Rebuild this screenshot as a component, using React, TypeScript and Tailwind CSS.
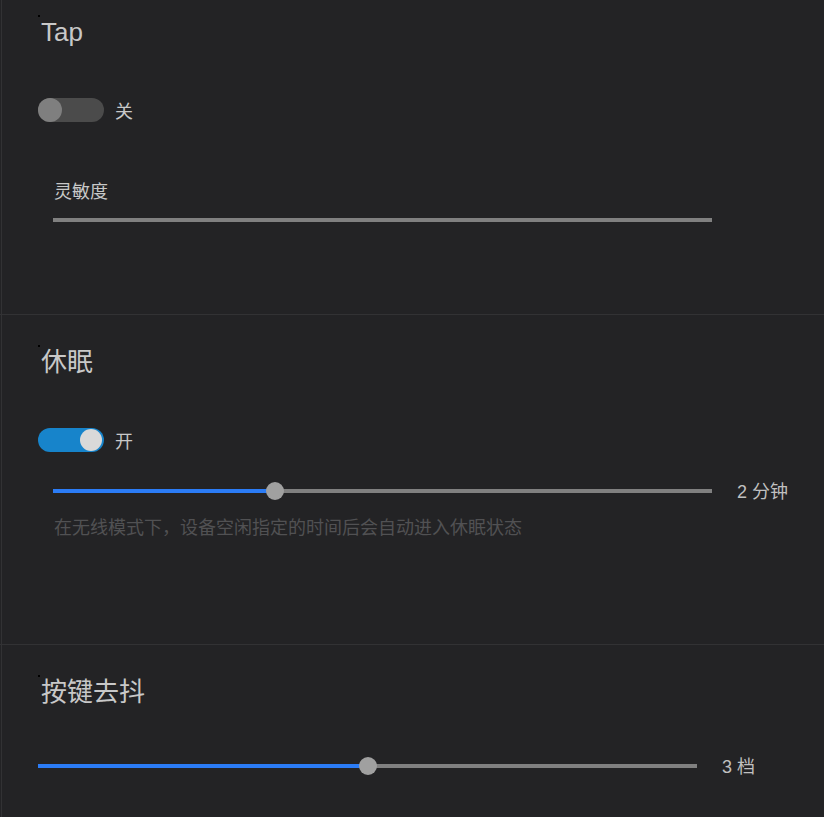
import React from "react";

const font = { fontFamily: '"Liberation Sans", "Noto Sans CJK SC", sans-serif' };

const Dot = () => <div className="ml-[36px] h-[2px] w-[2px] bg-black" />;

const Toggle = ({ on }: { on: boolean }) => (
  <div className="flex h-[24px] items-center gap-[11px]">
    {on ? (
      <div className="flex h-[24px] w-[66px] items-center justify-end rounded-full bg-[#1784cb] pr-[2px]">
        <div className="h-[22px] w-[22px] rounded-full bg-[#d9d9d9]" />
      </div>
    ) : (
      <div className="flex h-[24px] w-[66px] items-center rounded-full bg-[#4b4b4b]">
        <div className="h-[24px] w-[24px] rounded-full bg-[#7f7f7f]" />
      </div>
    )}
    <span className="relative top-[2px] text-[18px] leading-[24px] text-[#c8c8c8]">{on ? "开" : "关"}</span>
  </div>
);

const Slider = ({ pct, label, thumb = true }: { pct: number; label?: string; thumb?: boolean }) => (
  <div className="flex h-[18px] items-center">
    <div className="relative flex h-[18px] w-[659px] items-center">
      <div className="h-[4px] w-full bg-[#808080]" />
      {thumb && (
        <>
          <div className="absolute left-0 top-[7px] h-[4px] bg-[#2b7cf6]" style={{ width: `${pct}%` }} />
          <div
            className="absolute top-0 h-[18px] w-[18px] -translate-x-1/2 rounded-full bg-[#a0a0a0]"
            style={{ left: `${pct}%` }}
          />
        </>
      )}
    </div>
    {label && <span className="relative top-px ml-[25px] text-[18px] leading-[18px] text-[#c0c0c0]">{label}</span>}
  </div>
);

const Title = ({ children }: { children: React.ReactNode }) => (
  <h2 className="ml-[39px] text-[26px] leading-[30px] text-[#c8c8c8]">{children}</h2>
);

export default function App() {
  return (
    <div className="min-h-[817px] w-[824px] bg-[#232325]" style={font}>
      <div className="ml-px border-l border-[#323234]">
        <section className="h-[314px] pt-[15px]">
          <Dot />
          <Title>Tap</Title>
          <div className="ml-[36px] mt-[51px]">
            <Toggle on={false} />
          </div>
          <div className="ml-[52px] mt-[60px] text-[18px] leading-[20px] text-[#c8c8c8]">灵敏度</div>
          <div className="ml-[51px] mt-[9px]">
            <Slider pct={0} thumb={false} />
          </div>
        </section>
      </div>
      <div className="h-px bg-[#323234]" />
      <div className="ml-px border-l border-[#323234]">
        <section className="h-[329px] pt-[30px]">
          <Dot />
          <Title>休眠</Title>
          <div className="ml-[36px] mt-[51px]">
            <Toggle on={true} />
          </div>
          <div className="ml-[51px] mt-[30px]">
            <Slider pct={33.7} label="2 分钟" />
          </div>
          <p className="ml-[52px] mt-[17px] text-[18px] leading-[22px] text-[#515153]">
            在无线模式下，设备空闲指定的时间后会自动进入休眠状态
          </p>
        </section>
      </div>
      <div className="h-px bg-[#323234]" />
      <div className="ml-px border-l border-[#323234]">
        <section className="h-[172px] pt-[30px]">
          <Dot />
          <Title>按键去抖</Title>
          <div className="ml-[36px] mt-[50px]">
            <Slider pct={50} label="3 档" />
          </div>
        </section>
      </div>
    </div>
  );
}
